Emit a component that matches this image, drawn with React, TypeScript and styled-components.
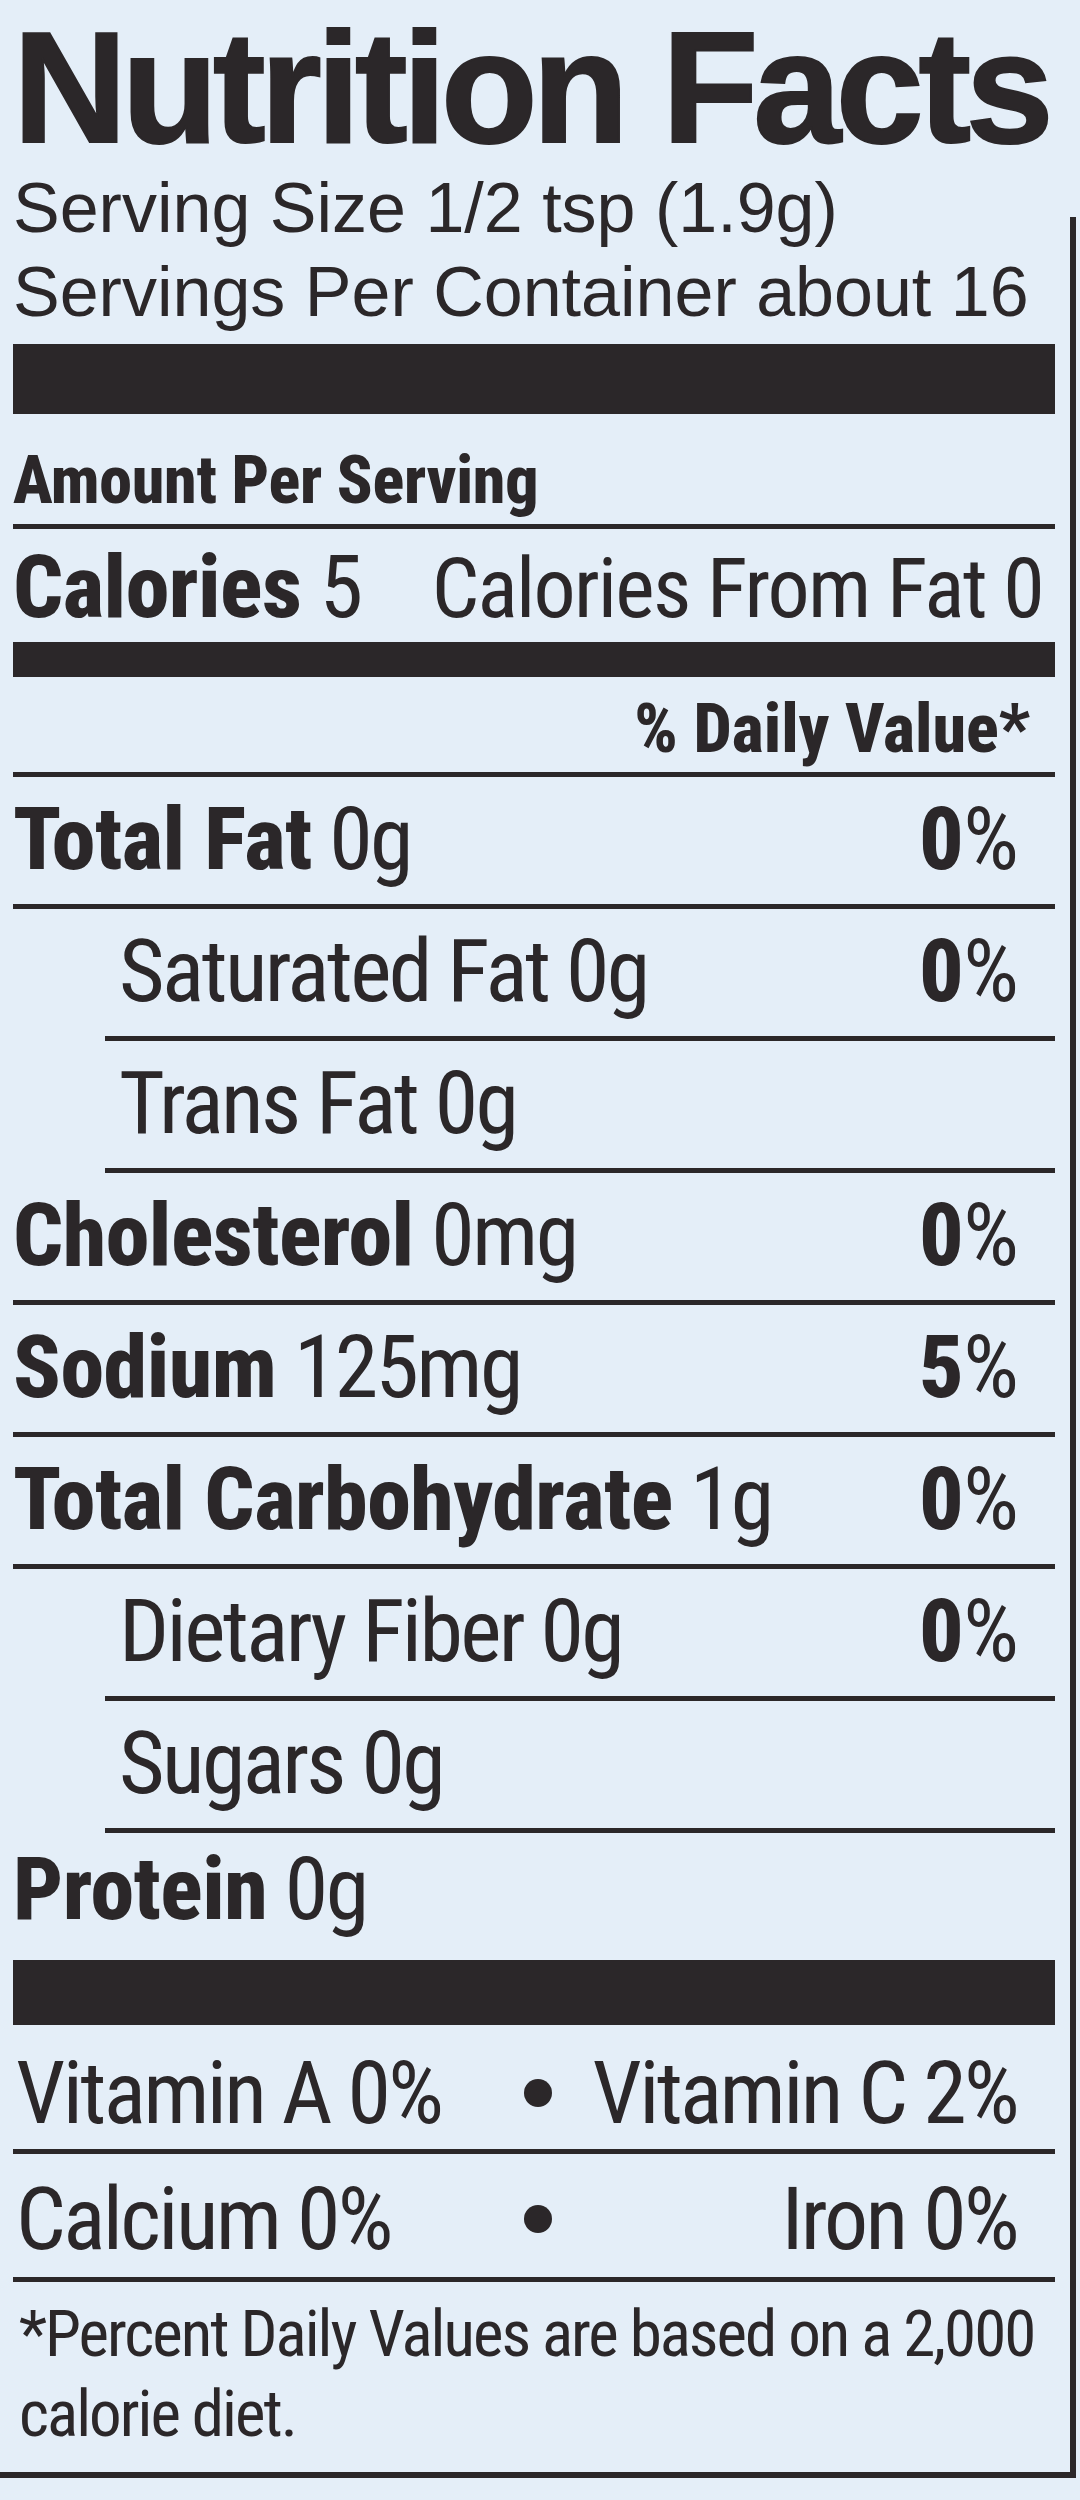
import React from "react";
import styled, { createGlobalStyle } from "styled-components";

const ink = "#2b2729";
const paper = "#e4eef8";
const narrow = `Roboto, "Liberation Sans", Arial, sans-serif`;
const wide = `"Liberation Sans", Arial, sans-serif`;

const GlobalStyle = createGlobalStyle`
  html, body {
    margin: 0;
    padding: 0;
    background: ${paper};
  }
  body {
    font-family: ${narrow};
    font-stretch: 75%;
    color: ${ink};
  }
  * { box-sizing: border-box; }
`;

/* The right edge of the printed box only enters the photo from y = 217 down. */
const Label = styled.section`
  width: 1076px;
  padding: 8px 21px 18px 13px;
  border-bottom: 6px solid ${ink};
  background:
    linear-gradient(${ink}, ${ink}) right 0 top 217px / 6px calc(100% - 217px) no-repeat,
    ${paper};
  color: ${ink};
  font-family: ${narrow};
  font-stretch: 75%;
`;

const Title = styled.h1`
  margin: 0;
  font-family: ${wide};
  font-stretch: 100%;
  font-weight: 700;
  font-size: 158px;
  line-height: 158px;
  letter-spacing: -5.3px;
  white-space: nowrap;
  -webkit-text-stroke: 2px ${ink};
`;

const ServingLine = styled.p`
  margin: 0;
  font-family: ${wide};
  font-stretch: 100%;
  font-weight: 400;
  font-size: 70px;
  line-height: 84px;
  white-space: nowrap;
`;

const Bar = styled.div<{ $h: number; $mt?: number }>`
  height: ${(p) => p.$h}px;
  margin-top: ${(p) => p.$mt ?? 0}px;
  background: ${ink};
`;

const AmountRow = styled.div`
  padding-top: 24px;
  font-weight: 800;
  font-size: 66px;
  line-height: 86px;
  letter-spacing: -0.3px;
  border-bottom: 5px solid ${ink};
  white-space: nowrap;
`;

const CaloriesRow = styled.div`
  display: flex;
  justify-content: space-between;
  align-items: baseline;
  padding-top: 4px;
  padding-right: 12px;
  font-size: 88px;
  line-height: 107px;
  letter-spacing: -0.02em;
  white-space: nowrap;
`;

const FromFat = styled.span`
  font-size: 84px;
`;

const DVRow = styled.div`
  padding-top: 10px;
  padding-right: 25px;
  text-align: right;
  font-weight: 800;
  font-size: 68px;
  line-height: 85px;
  border-bottom: 5px solid ${ink};
  white-space: nowrap;
`;

const NutrientRow = styled.div<{ $indent?: boolean; $line?: boolean; $lh?: number; $pb?: number }>`
  display: flex;
  justify-content: space-between;
  align-items: baseline;
  margin-left: ${(p) => (p.$indent ? 92 : 0)}px;
  padding-left: ${(p) => (p.$indent ? 14 : 0)}px;
  padding-right: 36px;
  padding-bottom: ${(p) => p.$pb ?? 3}px;
  font-size: 88px;
  line-height: ${(p) => p.$lh ?? 124}px;
  letter-spacing: -0.03em;
  border-bottom: ${(p) => (p.$line === false ? "none" : `5px solid ${ink}`)};
  white-space: nowrap;
`;

const Strong = styled.b`
  font-weight: 800;
  letter-spacing: -0.5px;
`;

const Pct = styled.span`
  font-size: 88px;
  letter-spacing: 0;
`;

const MinorRow = styled.div<{ $pt: number; $lh: number }>`
  display: grid;
  grid-template-columns: 1fr auto 1fr;
  align-items: center;
  padding-top: ${(p) => p.$pt}px;
  font-size: 88px;
  line-height: ${(p) => p.$lh}px;
  letter-spacing: -0.03em;
  border-bottom: 5px solid ${ink};
  white-space: nowrap;
`;

const MinorLeft = styled.span`
  justify-self: start;
  padding-left: 3px;
`;

const MinorRight = styled.span`
  justify-self: end;
  padding-right: 38px;
`;

const Dot = styled.span`
  display: block;
  width: 28px;
  height: 28px;
  margin-left: 8px;
  border-radius: 50%;
  background: ${ink};
`;

const Footnote = styled.p`
  margin: 0;
  padding-top: 12px;
  padding-left: 6px;
  font-size: 65px;
  line-height: 80px;
  letter-spacing: -2px;
  white-space: nowrap;
`;

type Nutrient = {
  name: string;
  amount: string;
  pct?: string;
  bold: boolean;
  indent?: boolean;
};

const nutrients: Nutrient[] = [
  { name: "Total Fat", amount: "0g", pct: "0", bold: true },
  { name: "Saturated Fat", amount: "0g", pct: "0", bold: false, indent: true },
  { name: "Trans Fat", amount: "0g", bold: false, indent: true },
  { name: "Cholesterol", amount: "0mg", pct: "0", bold: true },
  { name: "Sodium", amount: "125mg", pct: "5", bold: true },
  { name: "Total Carbohydrate", amount: "1g", pct: "0", bold: true },
  { name: "Dietary Fiber", amount: "0g", pct: "0", bold: false, indent: true },
  { name: "Sugars", amount: "0g", bold: false, indent: true },
];

export default function App() {
  return (
    <>
      <GlobalStyle />
      <Label>
        <Title>Nutrition Facts</Title>
        <ServingLine>Serving Size 1/2 tsp (1.9g)</ServingLine>
        <ServingLine>Servings Per Container about 16</ServingLine>
        <Bar $h={70} $mt={10} />
        <AmountRow>Amount Per Serving</AmountRow>
        <CaloriesRow>
          <span>
            <Strong>Calories</Strong> 5
          </span>
          <FromFat>Calories From Fat 0</FromFat>
        </CaloriesRow>
        <Bar $h={35} />
        <DVRow>% Daily Value*</DVRow>
        {nutrients.map((n) => (
          <NutrientRow key={n.name} $indent={n.indent}>
            <span>
              {n.bold ? <Strong>{n.name}</Strong> : n.name} {n.amount}
            </span>
            {n.pct !== undefined && (
              <Pct>
                <Strong>{n.pct}</Strong>%
              </Pct>
            )}
          </NutrientRow>
        ))}
        <NutrientRow $line={false} $lh={112} $pb={15}>
          <span>
            <Strong>Protein</Strong> 0g
          </span>
        </NutrientRow>
        <Bar $h={65} />
        <MinorRow $pt={12} $lh={112}>
          <MinorLeft>Vitamin A 0%</MinorLeft>
          <Dot />
          <MinorRight>Vitamin C 2%</MinorRight>
        </MinorRow>
        <MinorRow $pt={7} $lh={116}>
          <MinorLeft>Calcium 0%</MinorLeft>
          <Dot />
          <MinorRight>Iron 0%</MinorRight>
        </MinorRow>
        <Footnote>
          *Percent Daily Values are based on a 2,000
          <br />
          calorie diet.
        </Footnote>
      </Label>
    </>
  );
}
